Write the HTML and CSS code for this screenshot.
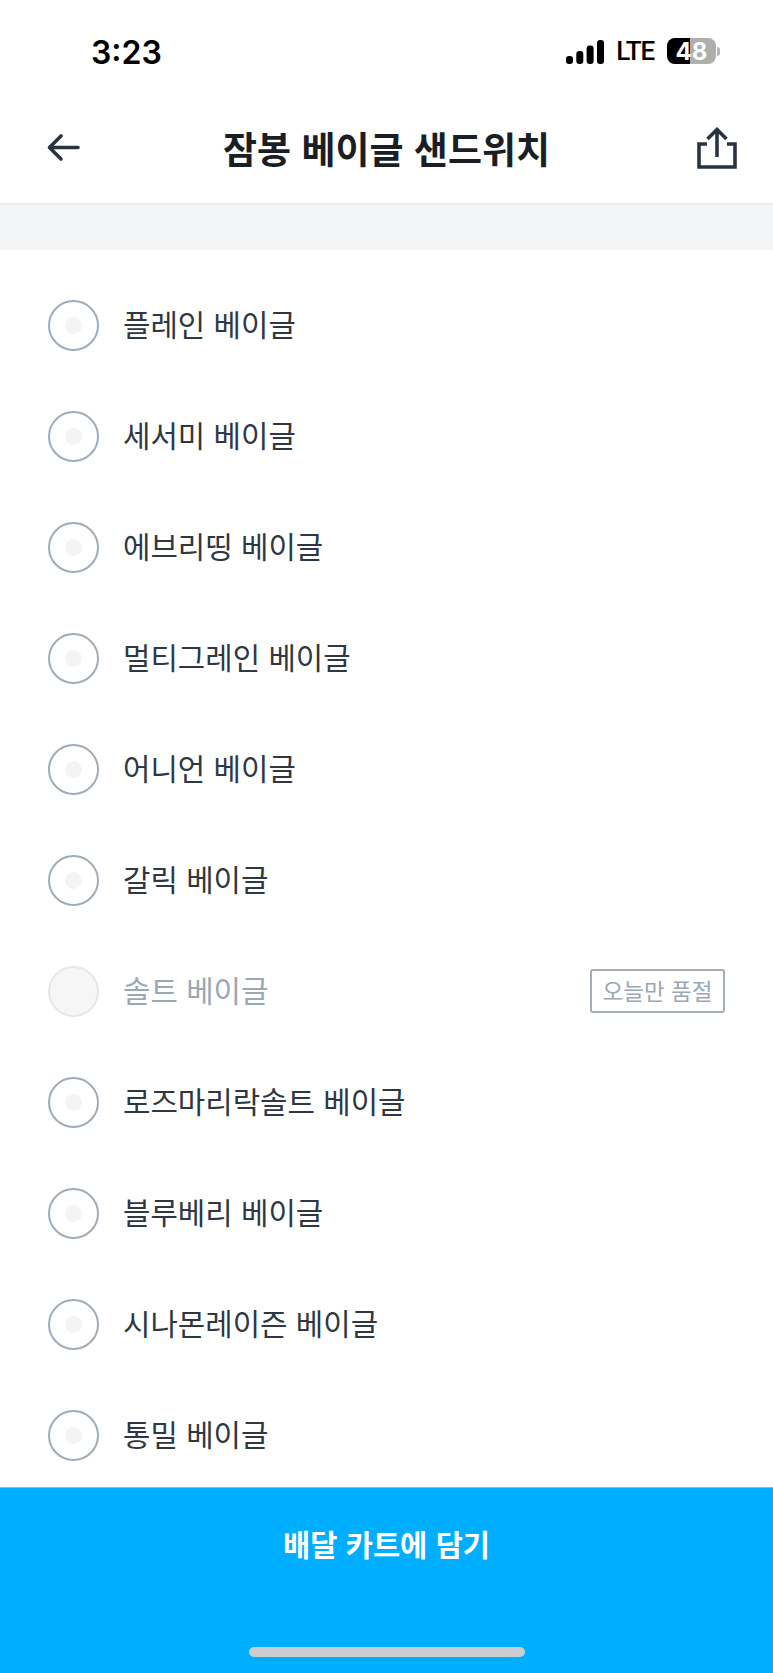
FILE: index.html
```html
<!DOCTYPE html>
<html lang="ko">
<head>
<meta charset="utf-8">
<title>잠봉 베이글 샌드위치</title>
<link rel="stylesheet" href="styles.css">
</head>
<body>
<div class="page">
  <header class="status">
    <span class="time">3:23</span>
    <div class="status-right">
      <svg class="signal" viewBox="0 0 38 24" aria-hidden="true">
        <rect x="0" y="16" width="7" height="8" rx="3"/>
        <rect x="10.3" y="11" width="7" height="13" rx="3"/>
        <rect x="20.6" y="5.5" width="7" height="18.5" rx="3"/>
        <rect x="31" y="0" width="7" height="24" rx="3"/>
      </svg>
      <span class="lte">LTE</span>
      <div class="battery">
        <span class="batt-fill"></span>
        <span class="batt-num">48</span>
      </div>
      <span class="batt-nub"></span>
    </div>
  </header>

  <nav class="nav">
    <svg class="icon-back" viewBox="0 0 36 30" aria-hidden="true">
      <path d="M32 14.5H3.5M15 3 3.5 14.5 15 26"/>
    </svg>
    <h1 class="title">잠봉 베이글 샌드위치</h1>
    <svg class="icon-share" viewBox="0 0 40 42" aria-hidden="true">
      <path d="M20 30V2.5M10.5 12 20 2.5l9.5 9.5M10 17H2v23h36V17h-8"/>
    </svg>
  </nav>

  <div class="band"></div>

  <ul class="list">
    <li class="row"><span class="radio"><i></i></span><span class="name">플레인 베이글</span></li>
    <li class="row"><span class="radio"><i></i></span><span class="name">세서미 베이글</span></li>
    <li class="row"><span class="radio"><i></i></span><span class="name">에브리띵 베이글</span></li>
    <li class="row"><span class="radio"><i></i></span><span class="name">멀티그레인 베이글</span></li>
    <li class="row"><span class="radio"><i></i></span><span class="name">어니언 베이글</span></li>
    <li class="row"><span class="radio"><i></i></span><span class="name">갈릭 베이글</span></li>
    <li class="row row-off"><span class="radio"></span><span class="name">솔트 베이글</span><span class="badge">오늘만 품절</span></li>
    <li class="row"><span class="radio"><i></i></span><span class="name">로즈마리락솔트 베이글</span></li>
    <li class="row"><span class="radio"><i></i></span><span class="name">블루베리 베이글</span></li>
    <li class="row"><span class="radio"><i></i></span><span class="name">시나몬레이즌 베이글</span></li>
    <li class="row"><span class="radio"><i></i></span><span class="name">통밀 베이글</span></li>
  </ul>

  <footer class="cta">
    <span class="cta-label">배달 카트에 담기</span>
    <span class="home"></span>
  </footer>
</div>
</body>
</html>
```

FILE: styles.css
```css
* { box-sizing: border-box; }
html, body { margin: 0; padding: 0; background: #fff; }
body { font-family: "Noto Sans CJK KR", "Noto Sans", sans-serif; }
.page {
  width: 773px;
  height: 1673px;
  display: flex;
  flex-direction: column;
  overflow: hidden;
}

/* status bar */
.status {
  height: 100px;
  flex: none;
  display: flex;
  align-items: flex-start;
  justify-content: space-between;
  padding: 31px 53px 0 91px;
}
.time {
  font-family: Inter, "Liberation Sans", sans-serif;
  font-weight: 600;
  font-size: 32px;
  line-height: 40px;
  padding-top: 2px;
  color: #000;
}
.status-right {
  display: flex;
  align-items: center;
  height: 40px;
}
.signal { width: 38px; height: 24px; fill: #000; margin-top: 2px; }
.lte {
  font-family: Roboto, "Liberation Sans", sans-serif;
  font-weight: 500;
  font-size: 26px;
  letter-spacing: -1.2px;
  color: #000;
  margin-left: 12px;
  margin-right: 13px;
}
.battery {
  position: relative;
  width: 49px;
  height: 26px;
  border-radius: 8px;
  background: #aeaeae;
  overflow: hidden;
  display: flex;
  align-items: center;
  justify-content: center;
}
.batt-fill {
  position: absolute;
  left: 0; top: 0; bottom: 0;
  width: 23px;
  background: #000;
}
.batt-num {
  position: relative;
  font-family: Inter, "Liberation Sans", sans-serif;
  font-weight: 700;
  font-size: 24px;
  color: #fff;
}
.batt-nub {
  width: 3px;
  height: 9px;
  margin-left: 1px;
  border-radius: 0 3px 3px 0;
  background: #b5b5b5;
}

/* nav */
.nav {
  height: 105px;
  flex: none;
  display: flex;
  align-items: center;
  justify-content: space-between;
  padding: 0 36px 8px 46px;
  border-bottom: 2px solid #e8eaec;
}
.icon-back { width: 36px; height: 30px; flex: none; fill: none; stroke: #2a3441; stroke-width: 3.6; stroke-linecap: round; stroke-linejoin: round; }
.icon-share { width: 40px; height: 42px; flex: none; fill: none; stroke: #2a3441; stroke-width: 3.6; stroke-linecap: butt; stroke-linejoin: miter; }
.title {
  margin: 0 6px 0 0;
  font-size: 37px;
  font-weight: 700;
  line-height: 50px;
  color: #1b1f25;
}

.band { height: 45px; flex: none; background: #f4f5f7; }

/* options */
.list {
  flex: 1;
  min-height: 0;
  margin: 0;
  padding: 20px 48px 0;
  list-style: none;
}
.row {
  height: 111px;
  display: flex;
  align-items: center;
  gap: 24px;
}
.radio {
  width: 51px;
  height: 51px;
  flex: none;
  border: 2px solid #a0acb9;
  border-radius: 50%;
  display: flex;
  align-items: center;
  justify-content: center;
}
.radio i {
  display: block;
  width: 17px;
  height: 17px;
  border-radius: 50%;
  background: #f3f4f6;
}
.name {
  font-size: 29.8px;
  line-height: 44px;
  padding-bottom: 6px;
  color: #2f3742;
}
.row-off .radio { border-color: #e5e7ea; background: #f6f6f7; }
.row-off .name { color: #9aa7b5; }
.badge {
  margin-left: auto;
  margin-bottom: 2px;
  width: 135px;
  height: 44px;
  padding-bottom: 2px;
  display: flex;
  align-items: center;
  justify-content: center;
  border: 2px solid #a3aebb;
  border-radius: 3px;
  font-size: 22.5px;
  color: #9aa7b5;
}

/* bottom button */
.cta {
  position: relative;
  flex: none;
  height: 186px;
  background: #00aeff;
  border-top: 1px solid #5cc9fb;
  display: flex;
  flex-direction: column;
  align-items: center;
}
.cta-label {
  margin-top: 34px;
  font-size: 29.6px;
  font-weight: 600;
  line-height: 44px;
  color: #fff;
}
.home {
  position: absolute;
  left: 249px;
  bottom: 16px;
  width: 276px;
  height: 10px;
  border-radius: 5px;
  background: #c9cdd0;
}
```
